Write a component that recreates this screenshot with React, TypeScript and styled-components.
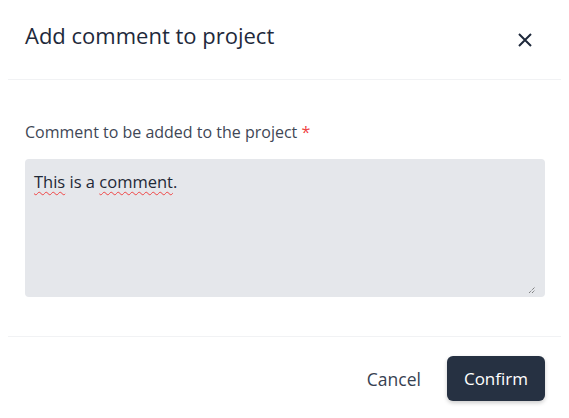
import React from 'react';
import styled, { createGlobalStyle } from 'styled-components';

const GlobalStyle = createGlobalStyle`
  html, body {
    margin: 0;
    padding: 0;
    background: #fff;
    font-family: 'Open Sans', 'Liberation Sans', sans-serif;
  }
`;

const Modal = styled.div`
  width: 569px;
  height: 418px;
  background: #fff;
  display: flex;
  flex-direction: column;
  box-sizing: border-box;
`;

const Header = styled.div`
  height: 79px;
  margin: 0 8px;
  padding: 0 17px;
  display: flex;
  justify-content: space-between;
  align-items: flex-start;
  border-bottom: 1px solid #f1f2f4;
`;

const Title = styled.h2`
  margin: 20px 0 0;
  font-size: 22px;
  font-weight: 400;
  color: #1e293b;
`;

const CloseButton = styled.button`
  margin-top: 31px;
  margin-right: 10px;
  width: 18px;
  height: 18px;
  padding: 0;
  border: none;
  background: none;
  color: #1e293b;
  cursor: pointer;
  display: flex;
  align-items: center;
  justify-content: center;
`;

const Body = styled.div`
  flex: 1;
  padding: 41px 24px 0 25px;
  display: flex;
  flex-direction: column;
`;

const Label = styled.label`
  font-size: 16px;
  color: #3f4756;
  margin-bottom: 16px;
`;

const Required = styled.span`
  color: #ef4444;
`;

const TextBox = styled.div`
  position: relative;
  height: 138px;
  background: #e5e7eb;
  border-radius: 4px;
  padding: 11px 9px;
  box-sizing: border-box;
  font-size: 16.5px;
  color: #1f2937;
  outline: none;
`;

const Misspelled = styled.span`
  text-decoration: underline wavy #ef4444;
  text-decoration-thickness: 1px;
  text-underline-offset: 3px;
`;

const Grip = styled.svg`
  position: absolute;
  right: 9px;
  bottom: 3px;
`;

const Footer = styled.div`
  height: 79px;
  margin: 0 8px;
  padding: 2px 16px 0 0;
  border-top: 1px solid #f1f2f4;
  display: flex;
  justify-content: flex-end;
  align-items: center;
  gap: 26px;
`;

const Button = styled.button<{ $primary?: boolean }>`
  font-family: inherit;
  border: none;
  cursor: pointer;
  border-radius: 6px;
  height: 45px;
  color: ${p => (p.$primary ? '#fff' : '#374151')};
  background: ${p => (p.$primary ? '#263142' : 'transparent')};
  box-shadow: ${p => (p.$primary ? '0 2px 4px rgba(0,0,0,0.2)' : 'none')};
  padding: ${p => (p.$primary ? '0 17px' : '0')};
  font-size: ${p => (p.$primary ? '17px' : '17.5px')};
`;

export default function App() {
  return (
    <Modal>
      <GlobalStyle />
      <Header>
        <Title>Add comment to project</Title>
        <CloseButton aria-label="Close">
          <svg width="16" height="16" viewBox="0 0 16 16">
            <path d="M2 2 L14 14 M14 2 L2 14" stroke="currentColor" strokeWidth="2" />
          </svg>
        </CloseButton>
      </Header>
      <Body>
        <Label>
          Comment to be added to the project <Required>*</Required>
        </Label>
        <TextBox role="textbox" contentEditable suppressContentEditableWarning>
          <Misspelled>This</Misspelled> is a <Misspelled>comment</Misspelled>.
          <Grip width="8" height="8" viewBox="0 0 8 8">
            <path d="M1 7 L7 1 M4 7 L7 4" stroke="#555" strokeWidth="1" strokeDasharray="1 1" />
          </Grip>
        </TextBox>
      </Body>
      <Footer>
        <Button>Cancel</Button>
        <Button $primary>Confirm</Button>
      </Footer>
    </Modal>
  );
}
